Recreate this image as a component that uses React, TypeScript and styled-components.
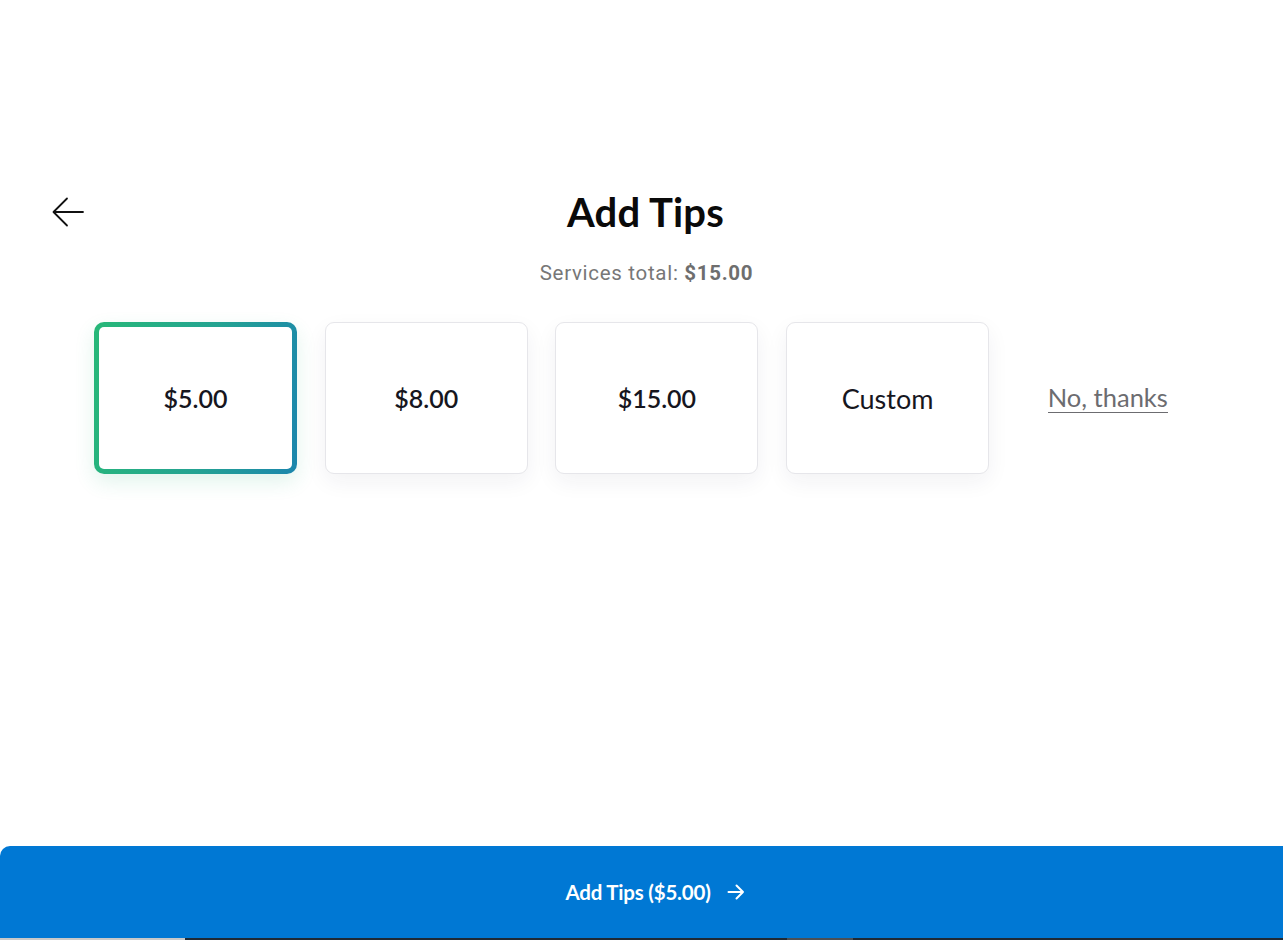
import React from "react";
import styled, { createGlobalStyle } from "styled-components";

const GlobalStyle = createGlobalStyle`
  html, body {
    margin: 0;
    padding: 0;
    background: #ffffff;
    font-family: Lato, "Open Sans", sans-serif;
  }
  * { box-sizing: border-box; }
`;

const Page = styled.div`
  height: 940px;
  display: flex;
  flex-direction: column;
  overflow: hidden;
`;

const Main = styled.main`
  flex: 1;
  padding-top: 188px;
`;

const Header = styled.header`
  display: grid;
  grid-template-columns: 1fr auto 1fr;
  align-items: center;
  padding: 0 44px 0 52px;
`;

const BackButton = styled.button`
  justify-self: start;
  background: none;
  border: none;
  padding: 0;
  width: 32px;
  height: 30px;
  cursor: pointer;
  color: #111;
  display: flex;
  align-items: center;
`;

const Title = styled.h1`
  margin: 0;
  font-family: Lato, sans-serif;
  font-weight: 700;
  font-size: 40px;
  line-height: 48px;
  color: #0a0a0a;
  letter-spacing: 0.2px;
`;

const Subtitle = styled.p`
  margin: 25px 0 0;
  text-align: center;
  font-family: Roboto, "Liberation Sans", sans-serif;
  font-size: 20.5px;
  line-height: 24px;
  color: #777777;
  letter-spacing: 0.7px;
  padding-left: 10px;

  > b {
    font-weight: 700;
    color: #6e6e6e;
  }
`;

const Options = styled.div`
  display: flex;
  align-items: center;
  gap: 27.7px;
  margin-top: 37px;
  padding-left: 94px;
`;

const TipCard = styled.button<{ $selected?: boolean; $custom?: boolean }>`
  width: 203px;
  height: 152px;
  border-radius: 9px;
  font-family: Lato, sans-serif;
  font-size: ${(p) => (p.$custom ? "27px" : "25px")};
  font-weight: ${(p) => (p.$custom ? 400 : 600)};
  color: #16161e;
  cursor: pointer;
  display: flex;
  align-items: center;
  justify-content: center;
  padding-top: ${(p) => (p.$custom ? "2px" : "0")};
  ${(p) =>
    p.$selected
      ? `
    border: 5px solid transparent;
    border-radius: 10px;
    background:
      linear-gradient(#fff, #fff) padding-box,
      linear-gradient(100deg, #27b878 0%, #24a392 55%, #1b86ad 100%) border-box;
    box-shadow: 0 8px 20px rgba(40, 180, 120, 0.14);
  `
      : `
    border: 1px solid #e6e6ea;
    background: #ffffff;
    box-shadow: 0 8px 22px rgba(30, 30, 60, 0.06);
  `}
`;

const NoThanks = styled.button`
  margin-left: 31px;
  background: none;
  border: none;
  padding: 0 0 1px;
  font-family: Lato, sans-serif;
  font-size: 25.5px;
  color: #6c6c70;
  border-bottom: 1.5px solid #6c6c70;
  line-height: 28px;
  cursor: pointer;
`;

const SubmitBar = styled.button`
  height: 92px;
  width: 100%;
  border: none;
  border-radius: 10px 0 0 0;
  background: #0078d4;
  color: #ffffff;
  font-family: Lato, sans-serif;
  font-weight: 700;
  font-size: 20.5px;
  letter-spacing: -0.2px;
  display: flex;
  align-items: center;
  justify-content: center;
  gap: 16px;
  cursor: pointer;
  padding-left: 33px;
`;

const Strip = styled.div`
  height: 2px;
  display: flex;
  background: #1f2a35;
`;

const StripPart = styled.span<{ $w: number; $c: string }>`
  width: ${(p) => p.$w}px;
  background: ${(p) => p.$c};
`;

const tips = ["$5.00", "$8.00", "$15.00"];

export default function App() {
  return (
    <Page>
      <GlobalStyle />
      <Main>
        <Header>
          <BackButton aria-label="Back">
            <svg width="32" height="30" viewBox="0 0 32 30" fill="none">
              <path
                d="M31 15H2M15 1.5L1.5 15L15 28.5"
                stroke="currentColor"
                strokeWidth="1.8"
                strokeLinecap="round"
                strokeLinejoin="round"
              />
            </svg>
          </BackButton>
          <Title>Add Tips</Title>
          <span />
        </Header>
        <Subtitle>
          Services total: <b>$15.00</b>
        </Subtitle>
        <Options>
          {tips.map((t, i) => (
            <TipCard key={t} $selected={i === 0}>
              {t}
            </TipCard>
          ))}
          <TipCard $custom>Custom</TipCard>
          <NoThanks>No, thanks</NoThanks>
        </Options>
      </Main>
      <SubmitBar>
        Add Tips ($5.00)
        <svg width="18" height="16" viewBox="0 0 18 16" fill="none">
          <path
            d="M1.5 8H16M9.5 1.5L16 8L9.5 14.5"
            stroke="currentColor"
            strokeWidth="2"
            strokeLinecap="round"
            strokeLinejoin="round"
          />
        </svg>
      </SubmitBar>
      <Strip>
        <StripPart $w={185} $c="#c9c9c9" />
        <StripPart $w={602} $c="#1f2a35" />
        <StripPart $w={66} $c="#4b5056" />
      </Strip>
    </Page>
  );
}
